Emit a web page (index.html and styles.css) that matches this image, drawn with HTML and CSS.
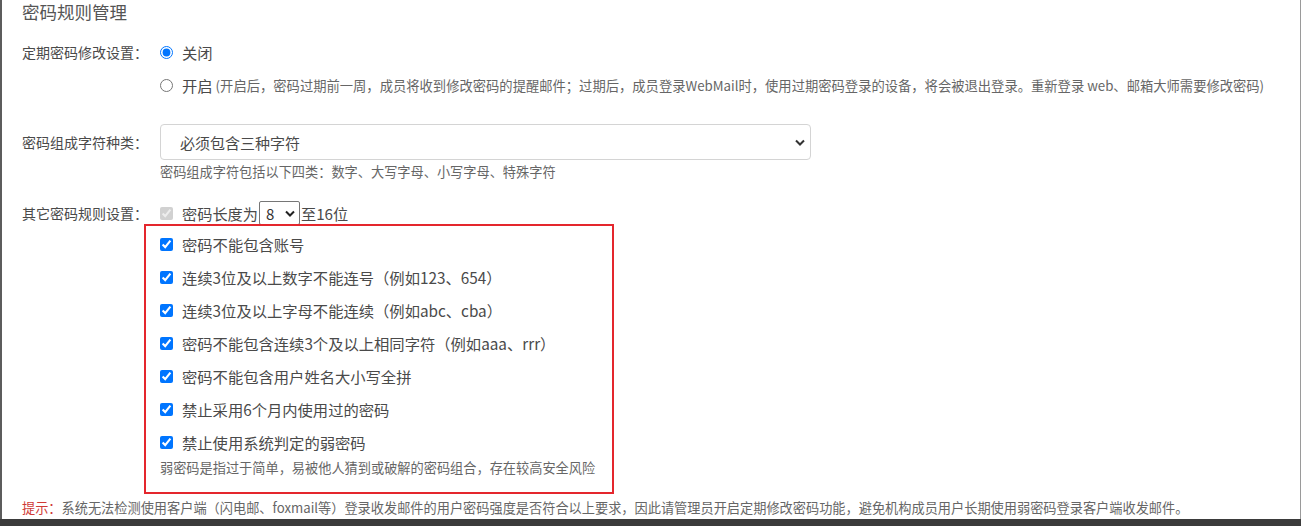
FILE: index.html
```html
<!DOCTYPE html>
<html lang="zh-CN">
<head>
<meta charset="utf-8">
<title>密码规则管理</title>
<link rel="stylesheet" href="styles.css">
</head>
<body>
<div class="page">
  <div class="panel">
    <h2 class="title">密码规则管理</h2>

    <div class="row row-period">
      <div class="label">定期密码修改设置：</div>
      <div class="field options">
        <label class="opt"><input type="radio" name="period" checked><span>关闭</span></label>
        <label class="opt"><input type="radio" name="period"><span>开启</span><span class="note">(开启后，密码过期前一周，成员将收到修改密码的提醒邮件；过期后，成员登录WebMail时，使用过期密码登录的设备，将会被退出登录。重新登录 web、邮箱大师需要修改密码)</span></label>
      </div>
    </div>

    <div class="row row-kind">
      <div class="label label-tall">密码组成字符种类：</div>
      <div class="field">
        <div class="select-big">
          <span>必须包含三种字符</span>
          <svg class="chev" width="10" height="7" viewBox="0 0 10 7"><polyline points="1,1.5 5,5.5 9,1.5" fill="none" stroke="#333" stroke-width="2"/></svg>
        </div>
        <div class="hint hint-kind">密码组成字符包括以下四类：数字、大写字母、小写字母、特殊字符</div>
      </div>
    </div>

    <div class="row row-other">
      <div class="label label-mid">其它密码规则设置：</div>
      <div class="field">
        <div class="len-line">
          <input type="checkbox" checked disabled>
          <span>密码长度为</span>
          <span class="select-small"><span>8</span><svg class="chev" width="10" height="7" viewBox="0 0 10 7"><polyline points="1,1.5 5,5.5 9,1.5" fill="none" stroke="#222" stroke-width="2"/></svg></span>
          <span>至16位</span>
        </div>
        <div class="rules">
          <ul class="rule-list">
            <li><label class="opt"><input type="checkbox" checked><span>密码不能包含账号</span></label></li>
            <li><label class="opt"><input type="checkbox" checked><span>连续3位及以上数字不能连号（例如123、654）</span></label></li>
            <li><label class="opt"><input type="checkbox" checked><span>连续3位及以上字母不能连续（例如abc、cba）</span></label></li>
            <li><label class="opt"><input type="checkbox" checked><span>密码不能包含连续3个及以上相同字符（例如aaa、rrr）</span></label></li>
            <li><label class="opt"><input type="checkbox" checked><span>密码不能包含用户姓名大小写全拼</span></label></li>
            <li><label class="opt"><input type="checkbox" checked><span>禁止采用6个月内使用过的密码</span></label></li>
            <li><label class="opt"><input type="checkbox" checked><span>禁止使用系统判定的弱密码</span></label></li>
          </ul>
          <div class="hint hint-weak">弱密码是指过于简单，易被他人猜到或破解的密码组合，存在较高安全风险</div>
        </div>
      </div>
    </div>

    <div class="tip"><span class="tip-key">提示：</span>系统无法检测使用客户端（闪电邮、foxmail等）登录收发邮件的用户密码强度是否符合以上要求，因此请管理员开启定期修改密码功能，避免机构成员用户长期使用弱密码登录客户端收发邮件。</div>
  </div>
  <div class="taskbar"></div>
</div>
</body>
</html>
```

FILE: styles.css
```css
html, body {
  margin: 0;
  padding: 0;
}
body {
  width: 1301px;
  height: 526px;
  overflow: hidden;
  background: #3b3b3b;
  font-family: "Noto Sans CJK SC", "Noto Sans", "Liberation Sans", sans-serif;
  color: #444;
}
.page {
  display: flex;
  flex-direction: column;
  height: 526px;
}
.panel {
  height: 519px;
  box-sizing: border-box;
  background: #fff;
  border-left: 2px solid #5c5c5c;
  border-right: 1px solid #9a9a9a;
  padding-left: 20px;
}
.taskbar {
  flex: 1;
  background: #3b3b3b;
}
.title {
  margin: 0;
  font-size: 17.5px;
  font-weight: 400;
  line-height: 24px;
  color: #555;
}
.row {
  display: flex;
}
.label {
  flex: none;
  width: 138px;
  font-size: 14px;
  line-height: 20px;
  color: #4a4a4a;
}
.label-tall {
  line-height: 36px;
}
.label-mid {
  line-height: 24px;
}
.field {
  display: flex;
  flex-direction: column;
}
.row-period {
  margin-top: 18px;
}
.options {
  gap: 13px;
}
.opt {
  display: flex;
  align-items: center;
  height: 20px;
  font-size: 15.3px;
  color: #4a4a4a;
  white-space: nowrap;
}
.opt input {
  width: 13px;
  height: 13px;
  margin: 0 9px 0 0;
  flex: none;
}
.note {
  font-size: 13.3px;
  color: #666;
  margin-left: 3px;
}
.row-kind {
  margin-top: 29px;
}
.select-big {
  width: 651px;
  height: 36px;
  box-sizing: border-box;
  border: 1px solid #d4d4d4;
  border-radius: 4px;
  display: flex;
  align-items: center;
  justify-content: space-between;
  padding: 0 5px 0 19px;
  font-size: 15px;
  color: #4a4a4a;
}
.hint {
  font-size: 13.2px;
  line-height: 18px;
  color: #666;
}
.hint-kind {
  margin-top: 3px;
}
.row-other {
  margin-top: 20px;
}
.len-line {
  display: flex;
  align-items: center;
  height: 24px;
  font-size: 15.2px;
  color: #4a4a4a;
  white-space: nowrap;
}
.len-line input {
  width: 13px;
  height: 13px;
  margin: 0 9px 0 0;
}
.select-small {
  display: inline-flex;
  align-items: center;
  justify-content: space-between;
  width: 41px;
  height: 24px;
  box-sizing: border-box;
  margin: 0 1px 0 1px;
  padding: 0 4px 0 6px;
  border: 1px solid #767676;
  border-radius: 2px;
  font-size: 15px;
  color: #333;
}
.rules {
  width: 470px;
  box-sizing: border-box;
  margin: -1px 0 0 -16px;
  border: 2px solid #e4262d;
  padding: 8px 14px 15px;
}
.rule-list {
  list-style: none;
  margin: 0;
  padding: 0;
  display: flex;
  flex-direction: column;
  gap: 13px;
}
.hint-weak {
  margin-top: 7px;
}
.tip {
  margin-top: 5px;
  font-size: 13.2px;
  line-height: 18px;
  color: #666;
  white-space: nowrap;
}
.tip-key {
  color: #cf3a36;
}
```
